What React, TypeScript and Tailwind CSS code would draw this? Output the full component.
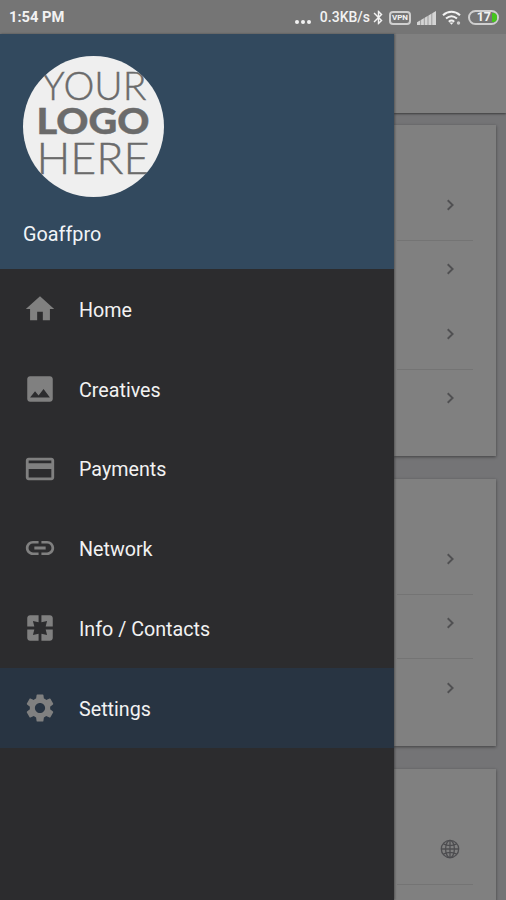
import clsx from "clsx";
import type { IconType } from "react-icons";
import { MdBluetooth, MdHome, MdImage, MdLink, MdPages, MdPayment, MdSettings } from "react-icons/md";

type MenuItem = { label: string; icon: IconType; active?: boolean };

const menu: MenuItem[] = [
  { label: "Home", icon: MdHome },
  { label: "Creatives", icon: MdImage },
  { label: "Payments", icon: MdPayment },
  { label: "Network", icon: MdLink },
  { label: "Info / Contacts", icon: MdPages },
  { label: "Settings", icon: MdSettings, active: true },
];

const Chevron = () => (
  <svg width="9" height="12" viewBox="0 0 9 12" fill="none" stroke="#505052" strokeWidth="1.9">
    <path d="M1.7 1.2 6.6 6 1.7 10.8" />
  </svg>
);

const Globe = () => (
  <svg width="20" height="20" viewBox="0 0 20 20" fill="none" stroke="#4d4d50" strokeWidth="1.3">
    <circle cx="10" cy="10" r="8.7" />
    <ellipse cx="10" cy="10" rx="4.4" ry="8.7" />
    <path d="M10 1.3v17.4M1.3 10h17.4M3.4 4.9c3.8 2 9.4 2 13.2 0M3.4 15.1c3.8-2 9.4-2 13.2 0" />
  </svg>
);

const StatusBar = () => (
  <header className="flex h-[34px] items-center bg-[#757575] pt-px pr-[7px] pl-[9px] text-[#f2f2f2]">
    <span className="text-[14.7px] font-bold">1:54 PM</span>
    <div className="ml-auto flex items-center">
      <div className="mt-[8px] mr-[9px] flex gap-[2px]">
        <i className="size-[4px] rounded-full bg-[#f2f2f2]" />
        <i className="size-[4px] rounded-full bg-[#f2f2f2]" />
        <i className="size-[4px] rounded-full bg-[#f2f2f2]" />
      </div>
      <span className="text-[14px] font-medium">0.3KB/s</span>
      <MdBluetooth size={17} className="-mr-px" />
      <span className="mr-[6px] ml-[3px] flex h-[14px] w-[22px] items-center justify-center rounded-[4px] border-2 border-[#cfcfcf] text-[8px] font-bold">
        VPN
      </span>
      <svg width="19" height="14" viewBox="0 0 19 14" fill="#d4d4d4" className="mr-[6px]">
        <path d="M0 11.200 19 0v14H0z" />
        <path d="M3.600 0v14M7.300 0v14M11 0v14M14.800 0v14" stroke="#757575" strokeWidth="0.6" />
      </svg>
      <svg width="20" height="16" viewBox="0 0 20 16" fill="none" stroke="#f2f2f2" strokeWidth="2" className="mr-[6px]">
        <path d="M1 5.200c5-4.600 12-4.600 17 0M4 8.600c3.500-3 7.500-3 11 0M6.800 11.700c1.800-1.500 3.600-1.500 5.400 0" />
        <path d="M7.500 12.500h4l-2 2.300z" fill="#f2f2f2" stroke="none" />
        <circle cx="16.500" cy="13" r="1.700" fill="#cfcfcf" stroke="none" />
      </svg>
      <span className="flex h-[15px] w-[31px] items-center justify-end rounded-full border-2 border-[#cfcfcf] text-[12.5px] leading-none font-bold">
        17
        <i className="ml-px h-[9px] w-[5px] shrink-0 rounded-r-[4px] bg-[#45c51c]" />
      </span>
    </div>
  </header>
);

const Logo = () => (
  <svg width="141" height="141" viewBox="0 0 141 141" fontFamily="Lato, sans-serif" fill="#6b6b6b">
    <clipPath id="disc">
      <circle cx="70.5" cy="70.5" r="70.5" />
    </clipPath>
    <g clipPath="url(#disc)">
      <rect width="141" height="141" fill="#efefef" />
      <g stroke="#6b6b6b" strokeWidth="0.4">
        <text x="18.500" y="43.800" fontSize="39" fontWeight="300" textLength="105" lengthAdjust="spacingAndGlyphs">YOUR</text>
        <text x="13.500" y="78" fontSize="35.500" fontWeight="900" textLength="113" lengthAdjust="spacingAndGlyphs">LOGO</text>
        <text x="13.500" y="118.300" fontSize="43.500" fontWeight="300" textLength="113" lengthAdjust="spacingAndGlyphs">HERE</text>
      </g>
    </g>
  </svg>
);

const Drawer = () => (
  <aside className="z-10 flex w-[394px] shrink-0 flex-col bg-[#2c2c2e] shadow-[1px_0_2px_rgba(0,0,0,0.35)]">
    <div className="h-[235px] bg-[#32495e] pt-[22px] pl-[23px]">
      <Logo />
      <p className="mt-[24px] text-[19.8px] leading-7 text-[#f1f4f7]">Goaffpro</p>
    </div>
    <nav className="pt-[0.5px]">
      {menu.map(({ label, icon: Icon, active }) => (
        <a
          key={label}
          className={clsx("flex h-[79.7px] items-center pl-[23px] text-[19.7px] text-[#f2f2f2]", active && "bg-[#283442]")}
        >
          <Icon size={34} className="mr-[22px] text-[#808080]" />
          <span className="mt-[3px]">{label}</span>
        </a>
      ))}
    </nav>
  </aside>
);

const Row = ({ line, globe }: { line?: boolean; globe?: boolean }) => (
  <div
    className={clsx(
      "mr-[23px] ml-[3px] flex h-[64.6px] items-center justify-end border-b pb-[6.6px]",
      line ? "border-[#747474]" : "border-transparent",
      globe ? "pr-[13px]" : "pr-[18px]"
    )}
  >
    {globe ? <Globe /> : <Chevron />}
  </div>
);

const card = "mr-[10px] shrink-0 bg-[#808080] pt-[51px] shadow-[0_1px_3px_rgba(0,0,0,0.45)]";

export default function App() {
  return (
    <div className="flex h-[900px] w-[506px] flex-col overflow-hidden bg-[#747476] font-['Roboto',sans-serif]">
      <StatusBar />
      <div className="flex min-h-0 flex-1">
        <Drawer />
        <main className="flex flex-1 flex-col overflow-hidden">
          <div className="h-[79px] shrink-0 bg-[#808080] shadow-[0_1px_2px_rgba(0,0,0,0.5)]" />
          <section className={clsx(card, "mt-[12px] h-[331px]")}>
            <Row line />
            <Row />
            <Row line />
            <Row />
          </section>
          <section className={clsx(card, "mt-[23px] h-[267px]")}>
            <Row line />
            <Row line />
            <Row />
          </section>
          <section className={clsx(card, "mt-[23px] h-[200px]")}>
            <Row line globe />
          </section>
        </main>
      </div>
    </div>
  );
}
